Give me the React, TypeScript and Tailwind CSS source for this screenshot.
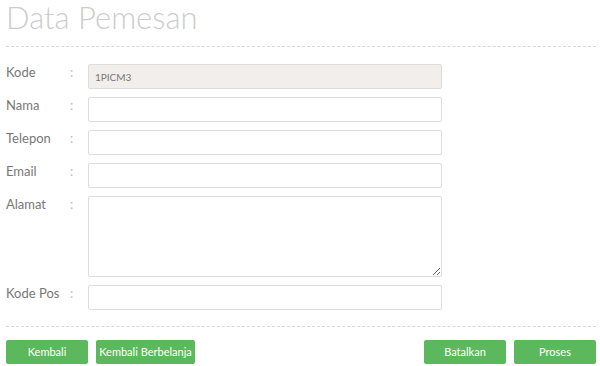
import * as React from "react";

const font = { fontFamily: "Lato, 'Open Sans', sans-serif" };

function Row({ label, children }: { label: string; children: React.ReactNode }) {
  return (
    <div className="flex items-start">
      <div className="flex w-[82px] shrink-0 -mt-[2px] text-[13px] leading-[20px] text-[#777]">
        <span className="w-[64px]">{label}</span>
        <span className="text-[#bbb]">:</span>
      </div>
      {children}
    </div>
  );
}

const inputCls =
  "h-[25px] w-[354px] rounded-[2px] border border-[#ddd] px-[6px] text-[10px] text-[#777] outline-none";

export default function App() {
  return (
    <div className="w-[600px] bg-white px-[6px] pr-[4px]" style={font}>
      <h1 className="text-[31px] font-light leading-[34px] text-[#cccccc]">Data Pemesan</h1>

      <div className="mt-[12px] border-t border-dashed border-[#d8d8d8]" />

      <div className="mt-[17px] flex flex-col gap-[8px]">
        <Row label="Kode">
          <input className={`${inputCls} bg-[#f1eeeb]`} readOnly value="1PICM3" />
        </Row>
        <Row label="Nama">
          <input className={`${inputCls} bg-white`} />
        </Row>
        <Row label="Telepon">
          <input className={`${inputCls} bg-white`} />
        </Row>
        <Row label="Email">
          <input className={`${inputCls} bg-white`} />
        </Row>
        <Row label="Alamat">
          <textarea className="h-[81px] w-[354px] rounded-[2px] border border-[#ddd] bg-white outline-none" />
        </Row>
        <Row label="Kode Pos">
          <input className={`${inputCls} bg-white`} />
        </Row>
      </div>

      <div className="mt-[16px] border-t border-dashed border-[#d8d8d8]" />

      <div className="mt-[13px] flex items-center justify-between">
        <div className="flex gap-[8px]">
          <button className="h-[24px] w-[82px] rounded-[2px] bg-[#5cb85c] text-[11px] text-white">Kembali</button>
          <button className="h-[24px] w-[99px] rounded-[2px] bg-[#5cb85c] text-[11px] text-white">
            Kembali Berbelanja
          </button>
        </div>
        <div className="flex gap-[8px]">
          <button className="h-[24px] w-[82px] rounded-[2px] bg-[#5cb85c] text-[11px] text-white">Batalkan</button>
          <button className="h-[24px] w-[82px] rounded-[2px] bg-[#5cb85c] text-[11px] text-white">Proses</button>
        </div>
      </div>
    </div>
  );
}
